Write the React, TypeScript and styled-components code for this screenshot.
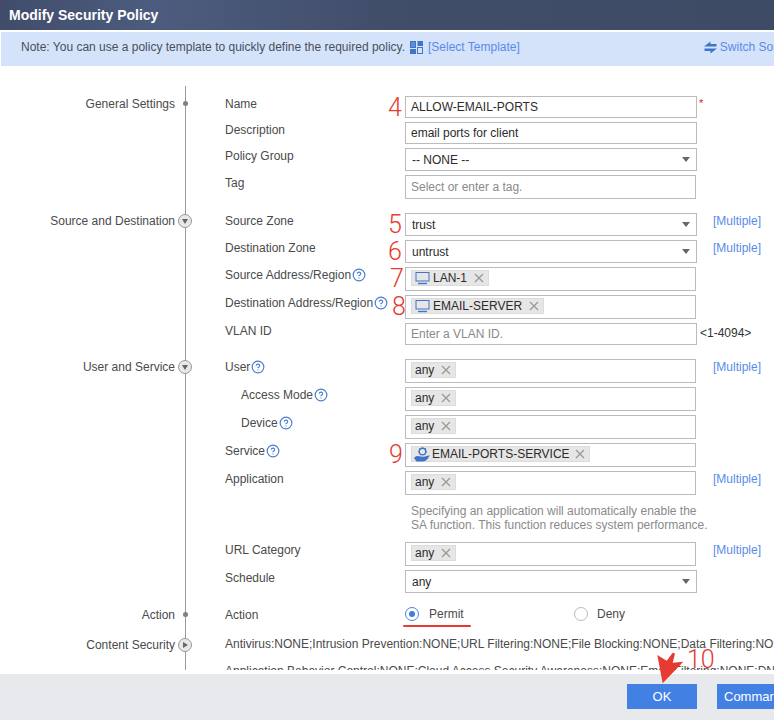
import React from "react";
import styled, { createGlobalStyle } from "styled-components";
import { CircleHelp } from "lucide-react";

const Global = createGlobalStyle`
  html, body { margin: 0; padding: 0; background: #fff; }
  body { font-family: "Liberation Sans", Arial, sans-serif; font-size: 12px; color: #444; }
  * { box-sizing: border-box; }
`;

const Dialog = styled.div`
  position: relative;
  width: 774px;
  height: 720px;
  display: flex;
  flex-direction: column;
  overflow: hidden;
  background: #fff;
`;

const Header = styled.header`
  flex: none;
  height: 30px;
  padding-left: 9px;
  display: flex;
  align-items: center;
  color: #fff;
  font-size: 14px;
  font-weight: 700;
  background: linear-gradient(90deg, #404c6a 0%, #4d5c7e 20%, #414e6a 50%, #3e4b65 100%);
`;

const Note = styled.div`
  flex: none;
  height: 34px;
  margin: 2px 0 0 1px;
  padding: 0 0 4px 20px;
  display: flex;
  align-items: center;
  white-space: nowrap;
  overflow: hidden;
  background: #d4e3fa;
  color: #4a4f5a;
`;

const NoteIcon = styled.svg`
  flex: none;
  width: 13px;
  height: 13px;
  margin-left: 5px;
`;

const LinkText = styled.span`
  color: #5a8ae8;
`;

const TemplateLink = styled(LinkText)`
  margin-left: 5px;
`;

const SwitchLink = styled(LinkText)`
  margin-left: 3px;
`;

const SwitchIcon = styled.svg`
  flex: none;
  width: 13px;
  height: 13px;
  margin-left: 184px;
`;

const Scroll = styled.div`
  flex: none;
  height: 604px;
  padding-top: 20px;
  overflow: hidden;
`;

const Section = styled.section`
  display: flex;
`;

const SectionHead = styled.div<{ $top: number }>`
  position: relative;
  flex: none;
  width: 185px;
  height: 15px;
  margin-top: ${(p) => p.$top + 1}px;
  padding-right: 10px;
  line-height: 15px;
  text-align: right;
  color: #4a4a4a;
`;

const Dot = styled.span`
  position: absolute;
  right: -3px;
  top: 4px;
  width: 5px;
  height: 5px;
  border-radius: 50%;
  background: #808080;
`;

const Toggle = styled.span`
  position: absolute;
  right: -7px;
  top: 0;
  width: 14px;
  height: 14px;
  border-radius: 50%;
  border: 1px solid #999;
  background: #e8e8e8;
  display: flex;
  align-items: center;
  justify-content: center;
`;

const ArrowDown = styled.i`
  width: 0;
  height: 0;
  border-left: 3px solid transparent;
  border-right: 3px solid transparent;
  border-top: 5px solid #666;
`;

const ArrowRight = styled.i`
  width: 0;
  height: 0;
  margin-left: 1px;
  border-top: 3px solid transparent;
  border-bottom: 3px solid transparent;
  border-left: 5px solid #666;
`;

const SectionBody = styled.div<{ $top: number; $bottom: number }>`
  flex: 1;
  min-width: 0;
  padding: ${(p) => p.$top}px 0 ${(p) => p.$bottom}px 39px;
  border-left: 1px solid #999;
  display: flex;
  flex-direction: column;
  gap: 4px;
`;

const Row = styled.div`
  display: grid;
  grid-template-columns: 180px 292px auto;
  align-items: start;
`;

const Label = styled.div<{ $indent?: boolean }>`
  display: flex;
  align-items: center;
  height: 15px;
  padding-left: ${(p) => (p.$indent ? 16 : 0)}px;
  white-space: nowrap;
  color: #4a4a4a;
`;

const Help = styled(CircleHelp)`
  flex: none;
  width: 14px;
  height: 14px;
  margin-left: 1px;
  color: #4a7cd2;
`;

const Field = styled.div`
  position: relative;
`;

const Mark = styled.span<{ $left: number }>`
  position: absolute;
  left: ${(p) => p.$left}px;
  top: -2px;
  font-family: Roboto, "Liberation Sans", sans-serif;
  font-weight: 300;
  font-size: 25px;
  line-height: 28px;
  color: #e63b30;
`;

const TextBox = styled.div<{ $h: number; $ph?: boolean; $w?: number }>`
  width: ${(p) => p.$w ?? 292}px;
  height: ${(p) => p.$h}px;
  padding-left: 5px;
  display: flex;
  align-items: center;
  border: 1px solid #bbb;
  background: #fff;
  color: ${(p) => (p.$ph ? "#8a8a8a" : "#2b2b2b")};
`;

const SelectBox = styled(TextBox)`
  justify-content: space-between;
  padding: 0 6px 0 6px;
`;

const Caret = styled.i`
  width: 0;
  height: 0;
  border-left: 4px solid transparent;
  border-right: 4px solid transparent;
  border-top: 5px solid #666;
`;

const TagBox = styled.div`
  width: 291px;
  height: 24px;
  padding: 2px 5px;
  border: 1px solid #bbb;
  background: #fff;
  display: flex;
  align-items: flex-start;
`;

const Tag = styled.span`
  height: 16px;
  padding: 0 4px 0 3px;
  display: inline-flex;
  align-items: center;
  gap: 3px;
  background: #e6e6e6;
  border: 1px solid #dcdcdc;
  color: #2b2b2b;
  white-space: nowrap;
`;

const ServiceTag = styled(Tag)`
  padding-left: 1px;
  gap: 1px;
`;

const TagClose = styled.svg`
  flex: none;
  width: 10px;
  height: 10px;
  margin-left: 4px;
`;

const TagIcon = styled.svg`
  flex: none;
  width: 15px;
  height: 14px;
`;

const ServiceGlyph = styled.svg`
  flex: none;
  width: 18px;
  height: 15px;
`;

const Side = styled.div<{ $left: number }>`
  margin-left: ${(p) => p.$left}px;
  height: 15px;
  line-height: 15px;
  white-space: nowrap;
`;

const Multiple = styled(Side)`
  margin-top: 1px;
  color: #5a8ae8;
`;

const Required = styled(Side)`
  color: #e02020;
  font-size: 11px;
`;

const Range = styled(Side)`
  margin-top: 3px;
  color: #333;
`;

const Hint = styled.div`
  grid-column: 2 / 4;
  width: 310px;
  padding: 5px 0 6px 6px;
  line-height: 14px;
  color: #8a8a8a;
`;

const RadioGroup = styled.div`
  position: relative;
  display: flex;
  grid-column: 2 / 4;
  margin-top: -1px;
`;

const RadioOption = styled.div`
  width: 169px;
  display: flex;
  align-items: center;
  height: 15px;
  color: #4a4a4a;
`;

const RadioCircle = styled.span<{ $on?: boolean }>`
  flex: none;
  width: 14px;
  height: 14px;
  margin-right: ${(p) => (p.$on ? 10 : 9)}px;
  border-radius: 50%;
  border: 1px solid ${(p) => (p.$on ? "#4a80e0" : "#bbb")};
  background: #fff;
  display: flex;
  align-items: center;
  justify-content: center;
`;

const RadioDot = styled.i`
  width: 6px;
  height: 6px;
  border-radius: 50%;
  background: #3f7be0;
`;

const Underline = styled.span`
  position: absolute;
  left: -2px;
  top: 19px;
  width: 68px;
  height: 2px;
  border-radius: 1px;
  background: #e63b30;
`;

const Summary = styled.div`
  display: flex;
  flex-direction: column;
  gap: 12px;
`;

const SummaryLine = styled.div`
  line-height: 15px;
  white-space: nowrap;
  color: #4a4a4a;
`;

const Footer = styled.footer`
  flex: none;
  height: 46px;
  margin-top: 4px;
  padding: 10px 0 0 627px;
  display: flex;
  gap: 20px;
  background: #e8e9ed;
`;

const Button = styled.button`
  flex: none;
  height: 25px;
  min-width: 70px;
  padding: 0 7px;
  border: none;
  background: #4380e4;
  color: #fff;
  font-family: "Liberation Sans", Arial, sans-serif;
  font-size: 13px;
  white-space: nowrap;
`;

const TenMark = styled.span`
  position: absolute;
  left: 687px;
  top: 646px;
  font-family: Roboto, "Liberation Sans", sans-serif;
  font-weight: 300;
  font-size: 25px;
  line-height: 28px;
  color: #e63b30;
`;

const PointerArrow = styled.svg`
  position: absolute;
  left: 650px;
  top: 645px;
  width: 40px;
  height: 42px;
`;

const Close = () => (
  <TagClose viewBox="0 0 10 10">
    <path d="M1 1 L9 9 M9 1 L1 9" stroke="#999" strokeWidth="1.3" fill="none" />
  </TagClose>
);

const Monitor = () => (
  <TagIcon viewBox="0 0 15 14">
    <rect x="1" y="1.5" width="13" height="8.5" fill="none" stroke="#3f74c8" strokeWidth="1" />
    <path d="M3 12.5 H12" stroke="#3f74c8" strokeWidth="1.4" />
  </TagIcon>
);

const ServiceIcon = () => (
  <ServiceGlyph viewBox="0 0 18 15">
    <circle cx="9.5" cy="4.6" r="3.3" fill="none" stroke="#3f74c8" strokeWidth="1.4" />
    <path
      d="M9.5 0.3 V1.8 M5.2 4.6 H6.6 M12.4 4.6 H13.9 M6.3 1.5 L7.3 2.5 M12.7 1.5 L11.7 2.5"
      stroke="#3f74c8"
      strokeWidth="1.2"
    />
    <path
      d="M1 11 C3 8.8 5 8.6 7.5 9.6 L11 9.8 L16.5 8.2 C15.5 12 12.5 14.6 8.5 14.6 L3.5 14.6 Z"
      fill="#3f74c8"
    />
  </ServiceGlyph>
);

type TagRowProps = { name: string; icon?: React.ReactNode };
const PolicyTag = ({ name, icon }: TagRowProps) => (
  <TagBox>
    <Tag>
      {icon}
      {name}
      <Close />
    </Tag>
  </TagBox>
);

const AnyBox = () => (
  <TagBox>
    <Tag>
      any
      <Close />
    </Tag>
  </TagBox>
);

export default function App() {
  return (
    <Dialog>
      <Global />
      <Header>Modify Security Policy</Header>
      <Note>
        Note: You can use a policy template to quickly define the required policy.
        <NoteIcon viewBox="0 0 13 13">
          <rect x="0.5" y="0.5" width="5" height="6" fill="#5f8cd6" stroke="#3f74c8" />
          <rect x="7.5" y="0" width="5.5" height="5" fill="#3f74c8" />
          <rect x="0" y="8" width="6" height="5" fill="#3f74c8" />
          <rect x="7.5" y="6.5" width="5" height="6" fill="none" stroke="#3f74c8" />
        </NoteIcon>
        <TemplateLink>[Select Template]</TemplateLink>
        <SwitchIcon viewBox="0 0 13 13">
          <path d="M0 5.5 L6.5 0.5 V3 H12.5 V5.5 Z M13 7.5 L6.5 12.5 V10 H0.5 V7.5 Z" fill="#3f74c8" />
        </SwitchIcon>
        <SwitchLink>Switch Source/Destination</SwitchLink>
      </Note>

      <Scroll>
        <Section>
          <SectionHead $top={10}>
            General Settings
            <Dot />
          </SectionHead>
          <SectionBody $top={10} $bottom={14}>
            <Row>
              <Label>Name</Label>
              <Field>
                <Mark $left={-17}>4</Mark>
                <TextBox $h={22}>ALLOW-EMAIL-PORTS</TextBox>
              </Field>
              <Required $left={2}>*</Required>
            </Row>
            <Row>
              <Label>Description</Label>
              <TextBox $h={22}>email ports for client</TextBox>
            </Row>
            <Row>
              <Label>Policy Group</Label>
              <SelectBox $h={23}>
                -- NONE --
                <Caret />
              </SelectBox>
            </Row>
            <Row>
              <Label>Tag</Label>
              <TextBox $h={24} $w={291} $ph>
                Select or enter a tag.
              </TextBox>
            </Row>
          </SectionBody>
        </Section>

        <Section>
          <SectionHead $top={0}>
            Source and Destination
            <Toggle>
              <ArrowDown />
            </Toggle>
          </SectionHead>
          <SectionBody $top={0} $bottom={14}>
            <Row>
              <Label>Source Zone</Label>
              <Field>
                <Mark $left={-17}>5</Mark>
                <SelectBox $h={23}>
                  trust
                  <Caret />
                </SelectBox>
              </Field>
              <Multiple $left={16}>[Multiple]</Multiple>
            </Row>
            <Row>
              <Label>Destination Zone</Label>
              <Field>
                <Mark $left={-17}>6</Mark>
                <SelectBox $h={23}>
                  untrust
                  <Caret />
                </SelectBox>
              </Field>
              <Multiple $left={16}>[Multiple]</Multiple>
            </Row>
            <Row>
              <Label>
                Source Address/Region
                <Help />
              </Label>
              <Field>
                <Mark $left={-15}>7</Mark>
                <PolicyTag name="LAN-1" icon={<Monitor />} />
              </Field>
            </Row>
            <Row>
              <Label>
                Destination Address/Region
                <Help />
              </Label>
              <Field>
                <Mark $left={-13}>8</Mark>
                <PolicyTag name="EMAIL-SERVER" icon={<Monitor />} />
              </Field>
            </Row>
            <Row>
              <Label>VLAN ID</Label>
              <TextBox $h={22} $ph>
                Enter a VLAN ID.
              </TextBox>
              <Range $left={3}>&lt;1-4094&gt;</Range>
            </Row>
          </SectionBody>
        </Section>

        <Section>
          <SectionHead $top={0}>
            User and Service
            <Toggle>
              <ArrowDown />
            </Toggle>
          </SectionHead>
          <SectionBody $top={0} $bottom={14}>
            <Row>
              <Label>
                User
                <Help />
              </Label>
              <AnyBox />
              <Multiple $left={16}>[Multiple]</Multiple>
            </Row>
            <Row>
              <Label $indent>
                Access Mode
                <Help />
              </Label>
              <AnyBox />
            </Row>
            <Row>
              <Label $indent>
                Device
                <Help />
              </Label>
              <AnyBox />
            </Row>
            <Row>
              <Label>
                Service
                <Help />
              </Label>
              <Field>
                <Mark $left={-16}>9</Mark>
                <TagBox>
                  <ServiceTag>
                    <ServiceIcon />
                    EMAIL-PORTS-SERVICE
                    <Close />
                  </ServiceTag>
                </TagBox>
              </Field>
            </Row>
            <Row>
              <Label>Application</Label>
              <AnyBox />
              <Multiple $left={16}>[Multiple]</Multiple>
            </Row>
            <Row>
              <div />
              <Hint>
                Specifying an application will automatically enable the SA function. This function reduces system
                performance.
              </Hint>
            </Row>
            <Row>
              <Label>URL Category</Label>
              <AnyBox />
              <Multiple $left={16}>[Multiple]</Multiple>
            </Row>
            <Row>
              <Label>Schedule</Label>
              <SelectBox $h={23}>
                any
                <Caret />
              </SelectBox>
            </Row>
          </SectionBody>
        </Section>

        <Section>
          <SectionHead $top={0}>
            Action
            <Dot />
          </SectionHead>
          <SectionBody $top={0} $bottom={15}>
            <Row>
              <Label>Action</Label>
              <RadioGroup>
                <RadioOption>
                  <RadioCircle $on>
                    <RadioDot />
                  </RadioCircle>
                  Permit
                </RadioOption>
                <RadioOption>
                  <RadioCircle />
                  Deny
                </RadioOption>
                <Underline />
              </RadioGroup>
            </Row>
          </SectionBody>
        </Section>

        <Section>
          <SectionHead $top={0}>
            Content Security
            <Toggle>
              <ArrowRight />
            </Toggle>
          </SectionHead>
          <SectionBody $top={0} $bottom={0}>
            <Summary>
              <SummaryLine>
                Antivirus:NONE;Intrusion Prevention:NONE;URL Filtering:NONE;File Blocking:NONE;Data Filtering:NONE
              </SummaryLine>
              <SummaryLine>
                Application Behavior Control:NONE;Cloud Access Security Awareness:NONE;Email Filtering:NONE;DNS
                Filtering:NONE
              </SummaryLine>
            </Summary>
          </SectionBody>
        </Section>
      </Scroll>

      <Footer>
        <Button>OK</Button>
        <Button>Command</Button>
      </Footer>

      <TenMark>10</TenMark>
      <PointerArrow viewBox="650 645 40 42">
        <polygon
          points="662.7,683.3 657.3,655 666.7,660.7 672.7,652.7 675,653.5 672.7,662.7 683.3,661.7"
          fill="#e63b30"
        />
      </PointerArrow>
    </Dialog>
  );
}
